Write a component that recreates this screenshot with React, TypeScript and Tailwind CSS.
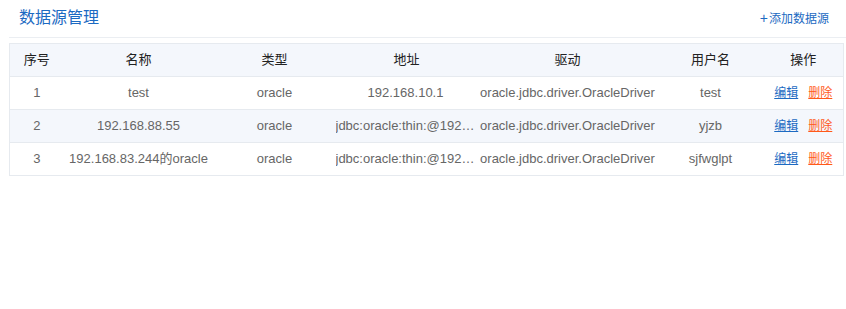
import React from "react";

const rows = [
  { id: 1, name: "test", type: "oracle", addr: "192.168.10.1", driver: "oracle.jdbc.driver.OracleDriver", user: "test" },
  { id: 2, name: "192.168.88.55", type: "oracle", addr: "jdbc:oracle:thin:@192.168.88.55:1521:orcl", driver: "oracle.jdbc.driver.OracleDriver", user: "yjzb" },
  { id: 3, name: "192.168.83.244的oracle", type: "oracle", addr: "jdbc:oracle:thin:@192.168.83.244:1521:orcl", driver: "oracle.jdbc.driver.OracleDriver", user: "sjfwglpt" },
];

const cols = ["序号", "名称", "类型", "地址", "驱动", "用户名", "操作"];
const widths = ["w-[54px]", "w-[150px]", "w-[122px]", "w-[142px]", "w-[180px]", "w-[106px]", "w-[80px]"];

export default function App() {
  return (
    <div
      className="w-[846px] h-[309px] bg-white"
      style={{ fontFamily: '"Liberation Sans", "Noto Sans CJK SC", sans-serif' }}
    >
      {/* Header */}
      <div className="ml-[9px] h-[38px] flex items-center justify-between border-b border-[#ebeef2] pl-[10px] pr-[17px]">
        <h1 className="text-[16px] text-[#1c6ac2] leading-none -mt-[2px]">数据源管理</h1>
        <button className="text-[12px] text-[#1c6ac2] leading-none -mt-[2px]">
          <span className="text-[14px] mr-[1px]">+</span>添加数据源
        </button>
      </div>

      {/* Table */}
      <table className="ml-[9px] mt-[5px] w-[834px] table-fixed border-collapse border border-[#e6eaef] text-[13px]">
        <colgroup>
          {widths.map((w) => (
            <col key={w} className={w} />
          ))}
        </colgroup>
        <thead>
          <tr className="h-[33px] bg-[#f4f7fc]">
            {cols.map((c) => (
              <th key={c} className="font-normal text-[#222] text-center">
                {c}
              </th>
            ))}
          </tr>
        </thead>
        <tbody className="text-[#666]">
          {rows.map((r, i) => (
            <tr key={r.id} className={`h-[33px] border-t border-[#e6eaef] ${i % 2 === 1 ? "bg-[#f4f7fc]" : "bg-white"}`}>
              <td className="text-center">{r.id}</td>
              <td className="text-center whitespace-nowrap">{r.name}</td>
              <td className="text-center">{r.type}</td>
              <td className="text-center whitespace-nowrap overflow-hidden text-ellipsis pr-[2px]">{r.addr}</td>
              <td className="text-center whitespace-nowrap">{r.driver}</td>
              <td className="text-center">{r.user}</td>
              <td className="text-center text-[12px] whitespace-nowrap">
                <a className="text-[#1c6ac2] underline cursor-pointer">编辑</a>
                <a className="ml-[10px] text-[#ff5a1a] underline cursor-pointer">删除</a>
              </td>
            </tr>
          ))}
        </tbody>
      </table>
    </div>
  );
}
